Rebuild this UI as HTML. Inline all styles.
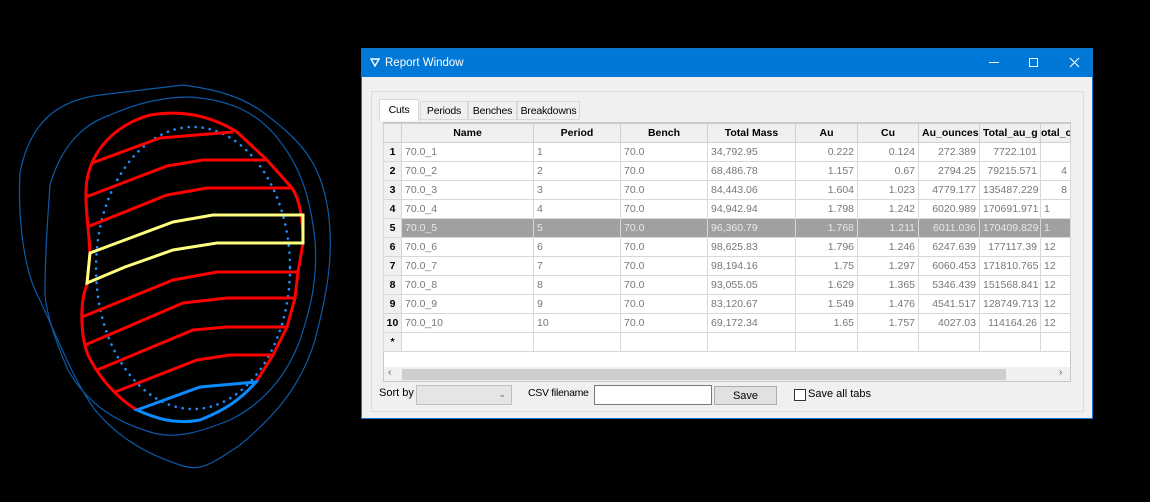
<!DOCTYPE html>
<html><head><meta charset="utf-8"><style>
*{margin:0;padding:0;box-sizing:border-box}
body{width:1150px;height:502px;background:#000;position:relative;overflow:hidden;font-family:"Liberation Sans",sans-serif;font-size:11px}
.win{position:absolute;left:361px;top:48px;width:732px;height:371px;background:#f0f0f0;border:1px solid #1a73c8}
.title{position:absolute;left:0;top:0;width:730px;height:28px;background:#0078d7;color:#fff;font-size:11.5px}
.title .t{position:absolute;left:23px;top:8px}
.grp{position:absolute;left:9px;top:42px;width:713px;height:321px;border:1px solid #dcdcdc}
.tab{position:absolute;top:52px;height:19px;border:1px solid #d9d9d9;background:#f0f0f0;padding:3px 0 0 0;text-align:center;font-size:10.5px;letter-spacing:-0.2px}
table{position:absolute;left:21px;top:74px;width:687px;border-collapse:collapse;table-layout:fixed;background:#fff}
td,th{height:19px;border:1px solid #d8d8d8;padding:0 3px;white-space:nowrap;overflow:hidden;font-size:10.5px;color:#777;font-weight:normal}
th{background:#f0f0f0;color:#000;font-weight:bold;text-align:center;border-color:#cfcfcf}
td.h{background:#f0f0f0;color:#000;font-weight:bold;text-align:center;padding:0}
td.r{text-align:right}
tr.sel td{background:#a0a0a0;color:#e8e8e8}
tr.sel td.h{background:#f0f0f0;color:#000}
</style></head><body>
<svg width="360" height="502" style="position:absolute;left:0;top:0" fill="none">
<path d="M20,173 C30,120 60,100 100,95 L183,85 C220,90 240,97 260,110 C300,140 320,160 328,210 C335,260 325,300 315,340 C300,390 270,420 240,445 C210,465 200,472 180,465 C150,455 120,440 95,410 C70,375 55,330 35,290 C22,260 18,210 20,173Z" stroke="#0a5aa8" stroke-width="1.2"/>
<path d="M50,185 C60,150 80,125 110,115 C140,102 165,97 190,97 C230,100 255,112 275,135 C300,165 310,195 315,240 C318,280 310,310 300,340 C285,380 260,405 230,420 C200,432 175,440 150,432 C110,420 85,400 68,370 C55,340 45,310 45,290 C45,250 48,215 50,185Z" stroke="#0a5aa8" stroke-width="1.2"/>
<ellipse cx="193" cy="268" rx="97" ry="141" stroke="#1e8fff" stroke-width="2.6" stroke-dasharray="0.1 7" stroke-linecap="round"/>
<path d="M137,410 C120,400 100,380 88,355 C80,335 80,300 87,285 L90,253 C88,220 84,200 87,180 C92,150 115,125 150,115 C180,110 210,115 237,132 L267,160 L292,188 C300,200 303,220 303,243 L298,272 L295,298 L287,327 L273,355 L256,382" stroke="#ff0000" stroke-width="3"/>
<path d="M92,163 L160,138 L233,132 M86,197 L167,166 L203,160 L267,160 M87,227 L167,195 L207,188 L293,188 M82,317 L173,280 L217,272 L298,272 M85,345 L183,303 L227,298 L295,298 M97,370 L193,330 L227,327 L287,327 M115,392 L197,360 L230,355 L273,355" stroke="#ff0000" stroke-width="3"/>
<path d="M90,253 L173,222 L213,215 L303,215 L303,243 L217,243 L173,250 L125,267 L87,283 Z" stroke="#ffff80" stroke-width="3"/>
<path d="M137,410 L200,387 L256,382 C240,400 225,410 200,420 C175,425 155,418 137,410Z" stroke="#0a8cff" stroke-width="3"/>
</svg>
<div class="win">
 <div class="title">
  <svg style="position:absolute;left:8px;top:8px" width="10" height="11"><path d="M1,2 L9,2 L5,9 Z" fill="none" stroke="#fff" stroke-width="1.4"/></svg>
  <span class="t">Report Window</span>
  <div style="position:absolute;left:627px;top:13px;width:10px;height:1px;background:#fff"></div>
  <div style="position:absolute;left:667px;top:9px;width:9px;height:9px;border:1px solid #fff"></div>
  <svg style="position:absolute;left:707px;top:8px" width="11" height="11"><path d="M1,1 L10,10 M10,1 L1,10" stroke="#fff" stroke-width="1.1"/></svg>
 </div>
 <div class="grp"></div>
 <div class="tab" style="left:17px;top:50px;width:40px;height:22px;background:#fff;border-bottom:none;padding-top:4px">Cuts</div>
 <div class="tab" style="left:58px;width:48px">Periods</div>
 <div class="tab" style="left:106px;width:49px">Benches</div>
 <div class="tab" style="left:155px;width:63px">Breakdowns</div>
 <div style="position:absolute;left:21px;top:73px;width:688px;height:260px;border:1px solid #c8c8c8;background:#fff"></div>
 <table>
 <colgroup><col style="width:18px"><col style="width:132px"><col style="width:87px"><col style="width:87px"><col style="width:88px"><col style="width:62px"><col style="width:61px"><col style="width:61px"><col style="width:61px"><col style="width:30px"></colgroup>
 <tr><th></th><th>Name</th><th>Period</th><th>Bench</th><th>Total Mass</th><th>Au</th><th>Cu</th><th>Au_ounces</th><th>Total_au_g</th><th style="text-align:left;padding:0">otal_c</th></tr>
 <tr><td class="h">1</td><td>70.0_1</td><td>1</td><td>70.0</td><td>34,792.95</td><td class="r">0.222</td><td class="r">0.124</td><td class="r">272.389</td><td class="r">7722.101</td><td></td></tr>
 <tr><td class="h">2</td><td>70.0_2</td><td>2</td><td>70.0</td><td>68,486.78</td><td class="r">1.157</td><td class="r">0.67</td><td class="r">2794.25</td><td class="r">79215.571</td><td class="r">4</td></tr>
 <tr><td class="h">3</td><td>70.0_3</td><td>3</td><td>70.0</td><td>84,443.06</td><td class="r">1.604</td><td class="r">1.023</td><td class="r">4779.177</td><td class="r">135487.229</td><td class="r">8</td></tr>
 <tr><td class="h">4</td><td>70.0_4</td><td>4</td><td>70.0</td><td>94,942.94</td><td class="r">1.798</td><td class="r">1.242</td><td class="r">6020.989</td><td class="r">170691.971</td><td>1</td></tr>
 <tr class="sel"><td class="h">5</td><td>70.0_5</td><td>5</td><td>70.0</td><td>96,360.79</td><td class="r">1.768</td><td class="r">1.211</td><td class="r">6011.036</td><td class="r">170409.829</td><td>1</td></tr>
 <tr><td class="h">6</td><td>70.0_6</td><td>6</td><td>70.0</td><td>98,625.83</td><td class="r">1.796</td><td class="r">1.246</td><td class="r">6247.639</td><td class="r">177117.39</td><td>12</td></tr>
 <tr><td class="h">7</td><td>70.0_7</td><td>7</td><td>70.0</td><td>98,194.16</td><td class="r">1.75</td><td class="r">1.297</td><td class="r">6060.453</td><td class="r">171810.765</td><td>12</td></tr>
 <tr><td class="h">8</td><td>70.0_8</td><td>8</td><td>70.0</td><td>93,055.05</td><td class="r">1.629</td><td class="r">1.365</td><td class="r">5346.439</td><td class="r">151568.841</td><td>12</td></tr>
 <tr><td class="h">9</td><td>70.0_9</td><td>9</td><td>70.0</td><td>83,120.67</td><td class="r">1.549</td><td class="r">1.476</td><td class="r">4541.517</td><td class="r">128749.713</td><td>12</td></tr>
 <tr><td class="h">10</td><td>70.0_10</td><td>10</td><td>70.0</td><td>69,172.34</td><td class="r">1.65</td><td class="r">1.757</td><td class="r">4027.03</td><td class="r">114164.26</td><td>12</td></tr>
 <tr><td class="h">*</td><td></td><td></td><td></td><td></td><td></td><td></td><td></td><td></td><td></td></tr>
 </table>
 <div style="position:absolute;left:22px;top:318px;width:686px;height:14px;background:#f0f0f0"></div>
 <div style="position:absolute;left:40px;top:320px;width:604px;height:11px;background:#cdcdcd"></div>
 <div style="position:absolute;left:26px;top:318px;font-size:10px;color:#555">&lsaquo;</div>
 <div style="position:absolute;left:697px;top:318px;font-size:10px;color:#555">&rsaquo;</div>
 <div style="position:absolute;left:17px;top:338px;font-size:11px">Sort by</div>
 <div style="position:absolute;left:54px;top:336px;width:96px;height:20px;border:1px solid #c0c0c0;background:#e5e5e5"><span style="position:absolute;right:5px;top:3px;font-size:9px;color:#666">&#8964;</span></div>
 <div style="position:absolute;left:166px;top:338px;font-size:10.5px;letter-spacing:-0.3px">CSV filename</div>
 <div style="position:absolute;left:232px;top:336px;width:118px;height:20px;border:1px solid #7a7a7a;background:#fff"></div>
 <div style="position:absolute;left:352px;top:337px;width:63px;height:19px;border:1px solid #adadad;background:#e1e1e1;text-align:center;padding-top:3px">Save</div>
 <div style="position:absolute;left:432px;top:340px;width:12px;height:12px;border:1px solid #333;background:#fff"></div>
 <div style="position:absolute;left:446px;top:339px;font-size:11px">Save all tabs</div>
</div>
</body></html>
